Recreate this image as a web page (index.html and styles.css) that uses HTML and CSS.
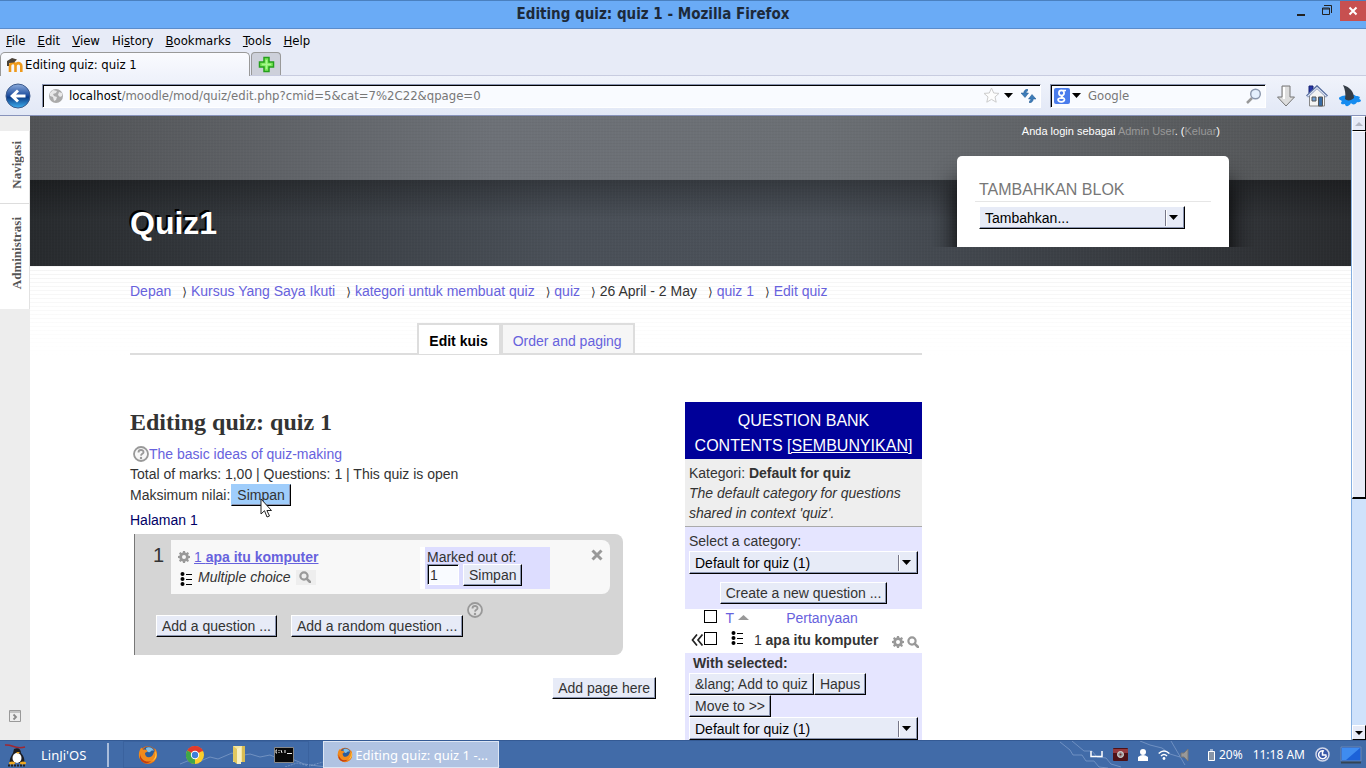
FILE: index.html
```html
<!DOCTYPE html>
<html lang="id">
<head>
    <meta charset="UTF-8">
    <meta name="viewport" content="width=device-width, initial-scale=1.0">
    <title>Editing quiz: quiz 1</title>
    <link rel="stylesheet" href="styles.css">
</head>
<body>
    <!-- Shared icons -->
    <svg class="sprite" aria-hidden="true">
        <defs>
            <symbol id="gear" viewBox="0 0 12 12">
                <path fill="#999" fill-rule="evenodd" d="M5 0h2l.3 1.6 1 .4L9.700 1.100l1.300 1.300L10.100 3.700l.4 1L12 5v2l-1.500.3-.4 1 .9 1.400-1.300 1.300L8.300 10l-1 .4L7 12H5l-.3-1.600-1-.4-1.400.9L1 9.600l.9-1.300-.4-1L0 7V5l1.500-.3.4-1L1 2.400 2.300 1.100 3.700 2l1-.4zM6 4a2 2 0 1 0 0 4 2 2 0 0 0 0-4z"/>
            </symbol>
            <symbol id="search" viewBox="0 0 12 12">
                <circle cx="5" cy="5" r="3.600" fill="none" stroke="#999" stroke-width="2.200"/>
                <path d="M7.600 7.600L11 11" stroke="#999" stroke-width="2.600" stroke-linecap="round"/>
            </symbol>
            <symbol id="choices" viewBox="0 0 13 14">
                <circle cx="2.500" cy="2" r="2"/><circle cx="2.500" cy="7" r="2"/><circle cx="2.500" cy="12" r="2"/>
                <path d="M6 2.500h6M6 7.500h6M6 12.500h6" stroke="#000"/>
            </symbol>
            <symbol id="help" viewBox="0 0 16 16">
                <circle cx="8" cy="8" r="7" fill="#eee" fill-opacity=".4" stroke="#999" stroke-width="1.800"/>
                <path d="M5.500 6.400C5.500 3.300 10.600 3.300 10.500 6.200 10.400 7.800 8.100 7.800 8 9.600" fill="none" stroke="#999" stroke-width="1.900"/>
                <circle cx="8" cy="12" r="1.200" fill="#999"/>
            </symbol>
            <symbol id="firefox" viewBox="0 0 20 20">
                <circle cx="10" cy="10" r="9" fill="#e56a10"/>
                <circle cx="10.500" cy="8" r="6.500" fill="#2a5d9c"/>
                <path d="M8 3c3-2 7 0 8 3-2-1-3 0-4 1s-4 0-4-4z" fill="#7fc0ea"/>
                <path d="M1.500 6C2 4 3 3 3.500 2.500L5 5c2-1 4 0 4.500 1.500L7 8c0 3 2 5 5 4 2-.5 3-2 4-5 1.500-2 1-3 .5-4 3 3 3.500 8 .5 12-4 5-12 4-15-1C.500 11 .600 9 1.500 6z" fill="#f08a1c"/>
                <path d="M2 9c1 6 6 9 11 7-3 4-10 2-11-3z" fill="#c23c10"/>
                <path d="M17 6c1.500 4 0 8-3 10 4-1 6-6 3-10z" fill="#ffd34a"/>
            </symbol>
        </defs>
    </svg>

    <header class="titlebar">
        <div class="window-title">Editing quiz: quiz 1 - Mozilla Firefox</div>
        <div class="window-controls">
            <button class="window-btn" aria-label="Minimize"><svg width="10" height="12"><path d="M1 10h8" stroke="#222" stroke-width="2"/></svg></button>
            <button class="window-btn" aria-label="Restore"><svg width="12" height="12"><path d="M3 .5h7.500V8M1.500 3h7v6.500h-7zM1 4h8" fill="none" stroke="#222"/></svg></button>
            <button class="window-btn window-close" aria-label="Close"><svg width="10" height="10"><path d="M1.500 1.500l7 7m0-7l-7 7" stroke="#fff" stroke-width="2"/></svg></button>
        </div>
    </header>

    <nav class="menubar">
        <a href="#"><u>F</u>ile</a>
        <a href="#"><u>E</u>dit</a>
        <a href="#"><u>V</u>iew</a>
        <a href="#">Hi<u>s</u>tory</a>
        <a href="#"><u>B</u>ookmarks</a>
        <a href="#"><u>T</u>ools</a>
        <a href="#"><u>H</u>elp</a>
    </nav>

    <div class="tabstrip">
        <button class="browser-tab">
            <svg width="16" height="14" viewBox="0 0 16 14">
                <path d="M3 14V6M8.500 14V7.500c0-3.500-5-3.500-5.500 0M8.500 8c0-3.800 5.800-3.800 5.800 0v6" fill="none" stroke="#ee9a1c" stroke-width="2.600"/>
                <path d="M0 3l5-3 5 1.500-3 3L2 5v3H0z" fill="#4b4238"/>
            </svg>
            <span>Editing quiz: quiz 1</span>
        </button>
        <button class="new-tab" aria-label="New tab">
            <svg width="17" height="17" viewBox="0 0 17 17"><path d="M6 1.500h5V6h4.500v5H11v4.500H6V11H1.500V6H6z" fill="#7be85a" stroke="#25a01c" stroke-width="1.500"/><path d="M8.500 4v9M4 8.500h9" stroke="#a8f890" stroke-width="1.500"/></svg>
        </button>
    </div>

    <div class="navbar">
        <button class="plain-btn" aria-label="Back">
            <svg width="26" height="26" viewBox="0 0 26 26">
                <defs><linearGradient id="backFill" x2="0" y2="1"><stop offset="0" stop-color="#8eaddd"/><stop offset=".5" stop-color="#1a4a9c"/><stop offset=".55" stop-color="#0b3c88"/><stop offset="1" stop-color="#3fb0f0"/></linearGradient></defs>
                <circle cx="13" cy="13" r="12" fill="url(#backFill)" stroke="#3c5a8c"/>
                <path d="M5 13l7-6.500 2 2L11 11.500h9.500v3H11l3 3-2 2z" fill="#fff"/>
            </svg>
        </button>
        <div class="field url-field">
            <svg width="16" height="16" viewBox="0 0 16 16"><circle cx="8" cy="8" r="7" fill="#aaa"/><path d="M2 5l3-3 4 1-1 2-3 1 1 2 3 1-1 3-2 1-1-4-3-1zM11 4l3 1v3l-2 1-2-2z" fill="#e8e8e8"/></svg>
            <label class="url" for="url"><span>localhost</span></label>
            <input id="url" class="field-input" type="text" value="/moodle/mod/quiz/edit.php?cmid=5&amp;cat=7%2C22&amp;qpage=0">
            <svg width="17" height="17" viewBox="0 0 17 17"><path d="M8.500 1l2.200 5 5.300.4-4 3.500 1.200 5.300-4.700-2.800-4.700 2.800L5 9.900 1 6.400 6.300 6z" fill="#fdfdfd" stroke="#ccc"/></svg>
            <svg width="9" height="6"><path d="M0 0h9L4.500 5z"/></svg>
            <svg class="reload" width="15" height="14" viewBox="0 0 15 14"><path d="M6.500 0C4 .5 2.800 2 2.800 4H0l4 4.500L7.500 4H5.200c0-1 .3-1.500 1.300-2zM8.500 14c2.500-.5 3.700-2 3.700-4H15l-4-4.500L7.500 10h2.300c0 1-.3 1.500-1.300 2z" fill="#3d7cb9" stroke="#1f548c" stroke-width=".500"/></svg>
        </div>
        <div class="field search-field">
            <svg width="16" height="16" viewBox="0 0 16 16"><rect width="16" height="16" rx="2" fill="#4a7cec"/><g fill="none" stroke="#fff" stroke-width="1.700"><circle cx="7.500" cy="5" r="2.600"/><path d="M9 2.500h3M8.500 7.500c-3 2 2 1.500 2 4 0 3-6.500 3-6.500.3 0-2 3-2 5-2"/></g></svg>
            <svg width="9" height="6"><path d="M0 0h9L4.500 5z"/></svg>
            <input class="field-input search-input" type="text" placeholder="Google" aria-label="Google">
            <svg width="16" height="16" viewBox="0 0 16 16"><path d="M6 10l-5 5" stroke="#999" stroke-width="2.500"/><circle cx="9.500" cy="6" r="4.800" fill="#e4effd" stroke="#8a96ac" stroke-width="1.400"/></svg>
        </div>
        <div class="nav-icons">
            <button class="plain-btn" aria-label="Downloads"><svg width="20" height="22" viewBox="0 0 20 22"><path d="M6 1h8v11h4.500L10 21 1.500 12H6z" fill="#ddd" stroke="#777"/><path d="M8 2v12" stroke="#fff" stroke-width="2"/></svg></button>
            <button class="plain-btn" aria-label="Home"><svg width="22" height="22" viewBox="0 0 22 22"><path d="M3.500 10v11h15V10L11 3z" fill="#f4f4f4" stroke="#888"/><path d="M3 8V1h4v4" fill="#2635a8" stroke="#152070"/><path d="M1 11.500L11 2l10 9.500" fill="none" stroke="#536a9c" stroke-width="3"/><path d="M1.500 11.500L11 2.500l9.500 9" fill="none" stroke="#dfe6f4" stroke-width="1.200"/><path d="M6 12h4v4H6z" fill="#6ea0d8" stroke="#555"/><path d="M12.500 12h4v9h-4z" fill="#386ca6" stroke="#555"/></svg></button>
            <button class="plain-btn" aria-label="Shark"><svg width="24" height="22" viewBox="0 0 24 22"><path d="M2 12c3-2 5-1 7-2 4 1 6-2 9 1 3 0 5 1 3 3 4 1 1 4-2 3-1 3-5 3-6 1-2 4-6 4-6 1-4 1-5-1-3-3-3-1-4-3-2-4z" fill="#168cf0"/><path d="M7 14C8 9 7 4 5 0c7 2 11 7 11 13-3 3-7 3-9 1z" fill="#343c46"/></svg></button>
        </div>
    </div>

    <div class="viewport">
        <aside class="dock">
            <div class="dock-items">
                <a href="#" class="dock-item"><span>Navigasi</span></a>
                <a href="#" class="dock-item"><span>Administrasi</span></a>
            </div>
            <button class="plain-btn dock-toggle" aria-label="Dock">
                <svg width="12" height="12" viewBox="0 0 12 12"><path d="M.5.5h11v11H.5zM0 2h12" fill="none" stroke="#999"/><path d="M4.500 4.500L7 7 4.500 9.500" fill="none" stroke="#888" stroke-width="1.800"/></svg>
            </button>
        </aside>

        <div class="page">
            <div class="page-header">
                <h1>Quiz1</h1>
                <div class="header-side">
                    <p class="login-info">Anda login sebagai <a href="#">Admin User</a>. (<a href="#">Keluar</a>)</p>
                    <div class="block-clip">
                        <section class="block">
                            <h2>TAMBAHKAN BLOK</h2>
                            <select class="select" aria-label="Tambahkan"><option>Tambahkan...</option></select>
                        </section>
                    </div>
                </div>
            </div>

            <div class="content">
                <ul class="breadcrumb">
                    <li><a href="#">Depan</a></li>
                    <li><a href="#">Kursus Yang Saya Ikuti</a></li>
                    <li><a href="#">kategori untuk membuat quiz</a></li>
                    <li><a href="#">quiz</a></li>
                    <li>26 April - 2 May</li>
                    <li><a href="#">quiz 1</a></li>
                    <li><a href="#">Edit quiz</a></li>
                </ul>

                <div class="main">
                    <ul class="tabs">
                        <li class="active">Edit kuis</li>
                        <li><a href="#">Order and paging</a></li>
                    </ul>

                    <div class="columns">
                        <div class="quiz">
                            <h2>Editing quiz: quiz 1</h2>
                            <p class="help-line"><svg width="16" height="16"><use href="#help"/></svg><a href="#">The basic ideas of quiz-making</a></p>
                            <p>Total of marks: 1,00 | Questions: 1 | This quiz is open</p>
                            <p class="grade-line">Maksimum nilai:<span class="hovered"><button class="btn btn-hover">Simpan</button><svg class="pointer" width="12" height="20" viewBox="0 0 12 20"><path d="M1 1v15l3.500-3.300L7 19l2.500-1-2.600-5.500H11.500z" fill="#fff" stroke="#222"/></svg></span></p>
                            <p class="page-label">Halaman 1</p>

                            <div class="quiz-page">
                                <div class="question-row">
                                    <span class="number">1</span>
                                    <div class="question">
                                        <div class="question-info">
                                            <p><svg width="12" height="12"><use href="#gear"/></svg><a href="#" class="question-link">1 <b>apa itu komputer</b></a></p>
                                            <p><svg class="type-icon" width="13" height="14"><use href="#choices"/></svg><i>Multiple choice</i><span class="preview"><svg width="12" height="12"><use href="#search"/></svg></span></p>
                                        </div>
                                        <div class="marks">
                                            <label for="mark">Marked out of:</label>
                                            <div class="marks-row">
                                                <input id="mark" type="text" value="1">
                                                <button class="btn">Simpan</button>
                                            </div>
                                        </div>
                                        <button class="plain-btn remove" aria-label="Remove"><svg width="12" height="12"><path d="M1.500 1.500l9 9m0-9l-9 9" stroke="#999" stroke-width="3"/></svg></button>
                                    </div>
                                </div>
                                <div class="add-row">
                                    <button class="btn">Add a question ...</button>
                                    <button class="btn">Add a random question ...</button>
                                    <svg class="add-help" width="16" height="16"><use href="#help"/></svg>
                                </div>
                            </div>

                            <div class="add-page"><button class="btn">Add page here</button></div>
                        </div>

                        <div class="bank">
                            <h3><span>QUESTION BANK</span><span>CONTENTS <a href="#">[SEMBUNYIKAN]</a></span></h3>
                            <div class="category-info">
                                <p>Kategori: <b>Default for quiz</b></p>
                                <p><i>The default category for questions shared in context 'quiz'.</i></p>
                            </div>
                            <div class="category-form">
                                <label for="category">Select a category:</label>
                                <select id="category" class="select"><option>Default for quiz (1)</option></select>
                                <div class="create"><button class="btn">Create a new question ...</button></div>
                            </div>
                            <table class="bank-table">
                                <tr>
                                    <td class="cell-add"></td>
                                    <td class="cell-check"><input type="checkbox" aria-label="Pilih semua"></td>
                                    <td class="cell-type"><a href="#">T</a> <svg width="11" height="10"><path d="M0 6l5.500-5L11 6z" fill="#999"/></svg></td>
                                    <th class="cell-name"><a href="#">Pertanyaan</a></th>
                                    <td></td>
                                </tr>
                                <tr>
                                    <td class="cell-add"><svg width="13" height="12" viewBox="0 0 13 12"><path d="M6 .5L1.500 6 6 11.500M11.500 .5L7 6l4.500 5.500" fill="none" stroke="#222" stroke-width="1.700"/></svg></td>
                                    <td class="cell-check"><input type="checkbox" aria-label="apa itu komputer"></td>
                                    <td class="cell-icon"><svg width="13" height="14"><use href="#choices"/></svg></td>
                                    <td class="cell-question">1 <b>apa itu komputer</b></td>
                                    <td class="cell-actions"><svg width="12" height="12"><use href="#gear"/></svg><svg width="12" height="12"><use href="#search"/></svg></td>
                                </tr>
                            </table>
                            <div class="with-selected">
                                <b>With selected:</b>
                                <div class="button-row">
                                    <button class="btn">&amp;lang; Add to quiz</button>
                                    <button class="btn">Hapus</button>
                                    <button class="btn">Move to &gt;&gt;</button>
                                </div>
                                <select class="select" aria-label="Move to"><option>Default for quiz (1)</option></select>
                            </div>
                        </div>
                    </div>
                </div>
            </div>
        </div>

        <div class="scrollbar">
            <button aria-label="Scroll up"><svg width="8" height="4"><path d="M0 4l4-4 4 4z" fill="#b4b8c4"/></svg></button>
            <div class="track"><div class="thumb"></div></div>
            <button aria-label="Scroll down"><svg width="8" height="4"><path d="M0 0h8L4 4z"/></svg></button>
        </div>
    </div>

    <footer class="taskbar">
        <svg class="wallpaper" width="100%" height="28" aria-hidden="true">
            <g fill="none" stroke="#b9cbe6" stroke-opacity=".4">
                <path d="M180 23l10-4 8 2 12-5 8 2 14-6 6 3 12-2 10 3 10-2 12 5 10-1 12 5 14 2 20 2"/>
                <path d="M285 26l12-4 12 3 14-4" stroke-dasharray="2 1"/>
                <path d="M350 25l30-8 40-4 40 8 40 4"/>
            </g>
            <svg x="100%" overflow="visible">
                <g fill="none" stroke="#9db5dc" stroke-opacity=".5">
                    <path d="M-306 1l10 8 3 5 9 0 4 6 8 0 5 6 9 1M-294 0l12 10 8 0 5 6 9 1 5 6 10 3"/>
                    <path d="M-226 0l10 4 12 3 8 6 10 3M-195 0l14 24"/>
                </g>
            </svg>
        </svg>
        <a class="start" href="#">
            <svg width="24" height="24" viewBox="0 0 24 24">
                <path d="M1 2c8-1 9 5 20 2" fill="none" stroke="#a02832" stroke-width="1.500"/>
                <path d="M10 6c4-2 7 0 7 4 3 3 4 7 3 10H6c-1-3 1-7 3-10z" fill="#1c1c22"/>
                <ellipse cx="13" cy="15" rx="4.500" ry="5" fill="#fff"/>
                <path d="M12 9h4l-2 2z" fill="#f0a820"/><ellipse cx="8" cy="20" rx="3" ry="1.500" fill="#f0a820"/><ellipse cx="19" cy="20" rx="3" ry="1.500" fill="#f0a820"/>
                <path d="M4 22.500h17" stroke="#222" stroke-width="2" stroke-dasharray="2 1"/>
            </svg>
            <span>LinJi'OS</span>
        </a>
        <div class="launchers">
            <button class="plain-btn" aria-label="Firefox"><svg width="20" height="20"><use href="#firefox"/></svg></button>
            <button class="plain-btn" aria-label="Chrome"><svg width="18" height="18" viewBox="0 0 18 18"><circle cx="9" cy="9" r="9" fill="#fbcf2c"/><path d="M9 9L1.200 4.500a9 9 0 0 1 15.600 0z" fill="#e23a2c"/><path d="M9 9l0 9A9 9 0 0 1 1.200 4.500z" fill="#3fa64a"/><path d="M9 4.500h7.800" stroke="#e23a2c" stroke-width="1.500"/><circle cx="9" cy="9" r="4.200" fill="#fff"/><circle cx="9" cy="9" r="3.200" fill="#3f7fd8"/></svg></button>
            <button class="plain-btn" aria-label="Files"><svg width="14" height="20" viewBox="0 0 14 20"><path d="M1 1h10v16H1z" fill="#f4e6a0"/><path d="M1 1l4 3v15l-4-3z" fill="#e2c860"/><path d="M5 4l4-2v17H5z" fill="#f8f0c4"/><path d="M10 1h3v16h-3z" fill="#d8bc54"/></svg></button>
            <button class="plain-btn" aria-label="Terminal"><svg width="20" height="16" viewBox="0 0 20 16"><path d="M.5.5h19v15H.5z" fill="#080808" stroke="#888"/><path d="M3 3h-1v3h1M5 3v1m0 1v1M7 3l1 3M11 3v3M13 6.500h5" stroke="#eee" fill="none"/></svg></button>
        </div>
        <button class="task"><svg width="16" height="16"><use href="#firefox"/></svg><span>Editing quiz: quiz 1 -...</span></button>
        <div class="tray">
            <svg width="13" height="7"><path d="M1 0v5.500h11V0" fill="none" stroke="#fff" stroke-width="1.500"/></svg>
            <svg width="15" height="13" viewBox="0 0 15 13"><rect width="15" height="13" rx="1" fill="#4e1216"/><path d="M0 1h15v4H0z" fill="#94383c"/><circle cx="7.500" cy="6.500" r="3" fill="#999" stroke="#ddd"/><circle cx="7.500" cy="6.500" r="1" fill="#722"/></svg>
            <svg width="10" height="12"><circle cx="5" cy="3" r="3" fill="#fff"/><path d="M0 12V8q5-4 10 0v4z" fill="#fff"/></svg>
            <svg width="12" height="11"><path d="M.7 4.500q5.300-5 10.600 0M3 7q3-3 6 0" fill="none" stroke="#fff" stroke-width="1.500"/><circle cx="6" cy="9.500" r="1.400" fill="#fff"/></svg>
            <svg width="10" height="12"><path d="M1 4h3l4-4v12L4 8H1z" fill="#999" stroke="#777"/></svg>
            <span class="battery"><svg width="7" height="12"><path d="M.5 2.500h6v9h-6zM2 1h3" fill="#8795a8" stroke="#fff"/></svg>20%</span>
            <span>11:18 AM</span>
            <svg width="15" height="15" viewBox="0 0 15 15"><circle cx="7.500" cy="7.500" r="6.500" fill="#3858a8" stroke="#cfd6e8" stroke-width="1.500"/><path d="M9 4a4 4 0 1 0 2.500 4.500M7.500 4v4h4" fill="none" stroke="#fff" stroke-width="1.500"/></svg>
            <svg width="22" height="18" viewBox="0 0 22 18"><path d="M1 1h20v14H1z" fill="#1c62d8" stroke="#6c88b0"/><path d="M2 2h18L6 14H2z" fill="#3f8cf0"/><path d="M1 16.500h20" stroke="#345" stroke-width="2"/></svg>
        </div>
    </footer>
</body>
</html>
```

FILE: styles.css
```css
:root {
    --ui: "DejaVu Sans Condensed", "DejaVu Sans", sans-serif;
    --text: "Liberation Sans", Arial, sans-serif;
    --serif: "Liberation Serif", "Times New Roman", serif;
    --link: #6762dd;
    --face: #e7ebf7;
}

* {
    margin: 0;
    padding: 0;
    box-sizing: border-box;
}

body {
    display: flex;
    flex-direction: column;
    height: 100vh;
    overflow: hidden;
    background: #fff;
    color: #333;
    font-family: var(--text);
    font-size: 14px;
    line-height: 20px;
}

a {
    color: var(--link);
    text-decoration: none;
}

ul {
    list-style: none;
}

svg {
    display: block;
    flex: none;
}

button, input, select {
    font: inherit;
    color: inherit;
}

.sprite {
    position: absolute;
    width: 0;
    height: 0;
}

.plain-btn {
    background: none;
    border: none;
}

/* Window title */
.titlebar {
    flex: none;
    display: flex;
    height: 29px;
    background: #6aabf6;
    border-top: 1px solid #4a80bf;
    border-bottom: 1px solid #5a8ccc;
}

.window-title {
    flex: 1;
    padding-left: 18px;
    text-align: center;
    font: bold 15px/26px var(--ui);
    color: #1d2a3a;
}

.window-controls {
    display: flex;
    align-items: flex-start;
}

.window-btn {
    display: flex;
    align-items: center;
    justify-content: center;
    width: 26px;
    height: 20px;
    background: none;
    border: none;
}

.window-close {
    background: #c75050;
}

/* Menus, tabs and location bar */
.menubar {
    flex: none;
    display: flex;
    gap: 12px;
    height: 23px;
    padding: 0 6px;
    background: var(--face);
    font: 13px/23px var(--ui);
}

.menubar a {
    color: #000;
}

.tabstrip {
    flex: none;
    display: flex;
    gap: 1px;
    height: 24px;
    background: var(--face);
    border-bottom: 1px solid #c8cce0;
    font: 13px/22px var(--ui);
    color: #000;
}

.browser-tab {
    display: flex;
    align-items: center;
    gap: 2px;
    width: 250px;
    height: 24px;
    padding: 0 6px;
    background: linear-gradient(#fafbff, #f0f3fb);
    border: 1px solid #999;
    border-bottom: none;
    border-radius: 5px 5px 0 0;
}

.new-tab {
    display: flex;
    align-items: center;
    justify-content: center;
    width: 30px;
    background: #cdd0da;
    border: 1px solid #999;
    border-bottom: none;
    border-radius: 4px 4px 0 0;
}

.navbar {
    flex: none;
    display: flex;
    align-items: center;
    gap: 9px;
    height: 40px;
    padding: 0 4px 0 5px;
    background: linear-gradient(#f0f3fb, #e2e8f6);
    border-bottom: 1px solid #8893bb;
    font: 13px/20px var(--ui);
}

.field {
    display: flex;
    align-items: center;
    height: 24px;
    background: #f9fbff;
    border: 1px solid #fff;
    border-top-color: #8a94b0;
    border-left-color: #8a94b0;
    box-shadow: inset 1px 1px 0 #000;
}

.url-field {
    flex: 1;
    margin-left: 2px;
    padding: 0 4px 0 5px;
}

.url {
    margin-left: 5px;
    color: #000;
}

.field-input {
    flex: 1;
    min-width: 0;
    background: none;
    border: none;
    outline: none;
    color: #777;
}

.url-field svg + svg {
    margin-left: 4px;
}

.url-field .reload {
    margin-left: 8px;
}

.search-field {
    gap: 2px;
    width: 216px;
    padding: 0 3px;
}

.search-input {
    padding-left: 5px;
}

.search-input::placeholder {
    color: #777;
}

.nav-icons {
    display: flex;
    align-items: center;
    gap: 10px;
    margin-left: 1px;
}

/* Page area */
.viewport {
    flex: 1;
    display: flex;
    min-height: 0;
    overflow: hidden;
}

.dock {
    flex: none;
    display: flex;
    flex-direction: column;
    justify-content: space-between;
    width: 30px;
    padding: 15px 0 18px;
    background: #ededed;
}

.dock-item {
    display: flex;
    justify-content: center;
    padding: 10px 0 14px 4px;
    background: #fff;
    border-bottom: 1px solid #ddd;
    border-right: 1px solid #e2e2e2;
    color: #555;
    font: bold 13px/18px var(--serif);
}

.dock-item + .dock-item {
    padding: 13px 0 20px 4px;
    border-bottom: none;
}

.dock-item span {
    writing-mode: vertical-rl;
    transform: rotate(180deg);
}

.dock-toggle {
    padding-left: 9px;
}

.page {
    flex: 1;
    min-width: 0;
    background: linear-gradient(transparent 150px, #fff 240px), repeating-linear-gradient(#fff 0 2px, #f4f4f4 2px 3px, #fff 3px 4px);
}

.page-header {
    display: flex;
    align-items: flex-end;
    justify-content: space-between;
    padding: 7px 97px 19px 100px;
    background:
        repeating-linear-gradient(90deg, rgba(255, 255, 255, 0.015) 0 1px, transparent 1px 3px),
        repeating-linear-gradient(rgba(0, 0, 0, 0.03) 0 1px, transparent 1px 3px),
        linear-gradient(90deg, #505255, #6d7177 35%, #6b6f74 60%, #515355) top / 100% 64px no-repeat,
        linear-gradient(rgba(0, 0, 0, 0.3), transparent 40px) 0 64px / 100% 40px no-repeat,
        linear-gradient(90deg, #272a2d, #4a5058 40%, #4b5159 60%, #292b2e);
}

.page-header h1 {
    margin-bottom: 5px;
    color: #fff;
    font-size: 32px;
    line-height: 38px;
    text-shadow: -2px -2px 0 #000;
}

.login-info {
    padding-right: 34px;
    text-align: right;
    color: #fff;
    font-size: 11px;
    line-height: 16px;
}

.login-info a {
    color: #999;
}

.block-clip {
    padding: 17px 25px 0;
    overflow: hidden;
}

.block {
    width: 272px;
    padding: 24px 18px 18px;
    background: #fff;
    border-radius: 5px 5px 0 0;
    box-shadow: 0 25px 25px #000;
}

.block h2 {
    margin-bottom: 4px;
    padding: 0 4px 1px;
    border-bottom: 1px solid #e6e6e6;
    color: #777;
    font-size: 16px;
    font-weight: normal;
}

.block .select {
    width: 206px;
    margin-left: 4px;
}

.content {
    padding: 15px 122px 0 100px;
}

.breadcrumb {
    display: flex;
}

.breadcrumb li + li::before {
    content: "⟩";
    margin: 0 4px 0 11px;
    color: #333;
    font: 12px/20px "DejaVu Sans", sans-serif;
}

.main {
    width: 72%;
    min-width: 792px;
}

.tabs {
    display: flex;
    justify-content: center;
    margin-top: 21px;
    border-bottom: 2px solid #ddd;
}

.tabs li {
    padding: 6px 11px 2px 10px;
    background: #f6f6f6;
    border: 2px solid #ddd;
    border-bottom: none;
}

.tabs .active {
    margin-bottom: -1px;
    padding-bottom: 3px;
    background: #fff;
    color: #000;
    font-weight: bold;
}

.columns {
    display: flex;
    align-items: flex-start;
    gap: 29px;
    margin-top: 47px;
}

/* Controls */
.btn {
    height: 22px;
    padding: 0 5px;
    background: var(--face);
    border: 1px solid #fff;
    border-right-color: #000;
    border-bottom-color: #000;
    box-shadow: inset -1px -1px 0 #8a94b0;
    line-height: 20px;
}

.btn-hover {
    background: #9fcdfb;
    border-top-color: #9fcdfb;
    border-left-color: #9fcdfb;
}

.select {
    display: block;
    width: 100%;
    height: 23px;
    padding: 0 5px;
    appearance: none;
    background: var(--face) url('data:image/svg+xml,<svg xmlns="http://www.w3.org/2000/svg" width="17" height="16"><path d="M.5 0v16" stroke="%23778"/><path d="M1.500 0v16" stroke="%23fff"/><path d="M4 5h9l-4.500 5z"/></svg>') right 2px center no-repeat;
    border: 1px solid #fff;
    border-right-color: #000;
    border-bottom-color: #000;
    border-radius: 0;
    box-shadow: inset -1px -1px 0 #8a94b0;
    color: #000;
}

/* Quiz */
.quiz {
    flex: 1;
}

.quiz h2 {
    margin: 7px 0 9px;
    font: bold 24px/26px var(--serif);
}

.help-line {
    display: flex;
    align-items: center;
    padding-left: 3px;
}

.grade-line {
    display: flex;
    align-items: center;
    height: 22px;
}

.hovered {
    position: relative;
    margin-left: 1px;
}

.hovered .btn {
    display: block;
}

.pointer {
    position: absolute;
    top: 14px;
    left: 29px;
    z-index: 1;
}

.page-label {
    margin-top: 4px;
    color: #006;
}

.quiz-page {
    margin: 4px 33px 0 4px;
    padding: 6px 13px 18px 0;
    background: #d5d5d5;
    border-left: 1px solid #777;
    border-radius: 0 8px 8px 0;
}

.question-row {
    display: flex;
}

.number {
    width: 36px;
    padding: 3px 7px 0 0;
    text-align: right;
    font-size: 20px;
    line-height: 24px;
}

.question {
    flex: 1;
    display: flex;
    align-items: flex-start;
    height: 54px;
    padding-left: 7px;
    background: #f8f8f8;
    border-radius: 0 8px 8px 0;
}

.question-info {
    flex: 1;
    padding-top: 7px;
}

.question-info p {
    display: flex;
    align-items: center;
    gap: 4px;
}

.question-link {
    text-decoration: underline;
}

.type-icon {
    margin: 4px 1px 0 2px;
}

.preview {
    margin-left: 1px;
    padding: 1px 5px 2px 3px;
    background: #eee;
}

.marks {
    width: 130px;
    height: 42px;
    margin-top: 7px;
    padding-left: 2px;
    background: #ddf;
    border-left: 5px solid #fff;
}

.marks label {
    display: block;
    height: 17px;
}

.marks-row {
    display: flex;
    gap: 4px;
}

.marks input {
    width: 32px;
    height: 21px;
    padding: 0 2px;
    background: #f9fbff;
    border: 1px solid #fff;
    border-top-color: #8a94b0;
    border-left-color: #8a94b0;
    box-shadow: inset 1px 1px 0 #000;
}

.remove {
    margin: 9px 7px 0 41px;
}

.add-row {
    display: flex;
    align-items: flex-end;
    gap: 14px;
    margin-top: 8px;
    padding-left: 21px;
}

.add-help {
    margin: 0 0 19px -10px;
}

.add-page {
    margin-top: 22px;
    text-align: right;
}

/* Question bank */
.bank {
    width: 237px;
}

.bank h3 {
    display: flex;
    flex-direction: column;
    align-items: center;
    padding: 6px 8px 1px;
    background: #009;
    color: #fff;
    font-size: 16px;
    font-weight: normal;
    line-height: 25px;
    white-space: nowrap;
}

.bank h3 a {
    color: #fff;
    text-decoration: underline;
}

.category-info {
    padding: 4px 4px 3px;
    background: #eee;
    border-bottom: 1px solid #aaa;
}

.category-form {
    padding: 4px 4px 5px;
    background: #e5e5ff;
}

.create {
    margin-top: 8px;
    text-align: center;
}

.category-form .btn, .add-page .btn {
    display: inline-block;
    vertical-align: top;
}

.bank-table {
    width: 100%;
    border-collapse: collapse;
}

.bank-table td, .bank-table th {
    height: 22px;
    font-weight: normal;
    line-height: 18px;
    vertical-align: top;
    white-space: nowrap;
}

.bank-table svg {
    display: inline-block;
}

.cell-type svg {
    vertical-align: -1px;
}

.bank-table .cell-add {
    width: 19px;
    padding-left: 6px;
}

.bank-table .cell-add svg {
    display: block;
    margin-top: 3px;
}

.cell-check input {
    display: block;
    width: 13px;
    height: 13px;
    margin-top: 1px;
    appearance: none;
    background: #fff;
    border: 1px solid #000;
}

.cell-type {
    padding-left: 7px;
}

.cell-icon {
    padding-left: 13px;
}

.cell-question {
    padding-left: 2px;
}

.bank-table .cell-actions svg {
    vertical-align: -3px;
}

.cell-actions svg + svg {
    margin-left: 3px;
}

.with-selected {
    padding: 0 4px;
    background: #e5e5ff;
}

.with-selected > b {
    padding-left: 4px;
}

.button-row {
    display: flex;
    flex-wrap: wrap;
}

/* Scrollbar */
.scrollbar {
    flex: none;
    display: flex;
    flex-direction: column;
    width: 15px;
    background: #cfe2fb;
    border-left: 1px solid #84aee0;
}

.scrollbar button {
    display: flex;
    align-items: center;
    justify-content: center;
    height: 15px;
    background: var(--face);
    border: 1px solid #fff;
    border-right-color: #000;
    border-bottom-color: #000;
}

.track {
    flex: 1;
}

.thumb {
    height: 62%;
    background: var(--face);
    border: 1px solid #fff;
    border-right-color: #000;
    border-bottom: 2px solid #000;
}

/* Taskbar */
.taskbar {
    position: relative;
    flex: none;
    display: flex;
    align-items: center;
    height: 28px;
    padding: 0 4px;
    background: #416ba8;
    border-top: 1px solid #345a94;
    color: #fff;
    font: 13px/20px "Noto Sans", "Open Sans", sans-serif;
}

.wallpaper {
    position: absolute;
    top: 0;
    left: 0;
}

.start, .launchers, .task, .tray {
    position: relative;
}

.start {
    display: flex;
    align-items: center;
    gap: 13px;
    padding-right: 21px;
    border-right: 2px solid #a9bddb;
    color: #fff;
    line-height: 18px;
}

.launchers {
    display: flex;
    align-items: center;
    justify-content: space-between;
    width: 186px;
    height: 27px;
    margin: 0 14px;
    padding: 0 14px;
    border: 1px solid #3a629e;
}

.task {
    display: flex;
    align-items: center;
    gap: 2px;
    height: 27px;
    padding: 0 10px 0 13px;
    background: #b0c3e2;
    border: 1px solid #dde6f4;
    color: #fff;
}

.tray {
    display: flex;
    align-items: center;
    gap: 10px;
    margin-left: auto;
    font-size: 12px;
}

.battery {
    display: flex;
    align-items: center;
    gap: 4px;
    margin-left: 8px;
}
```
